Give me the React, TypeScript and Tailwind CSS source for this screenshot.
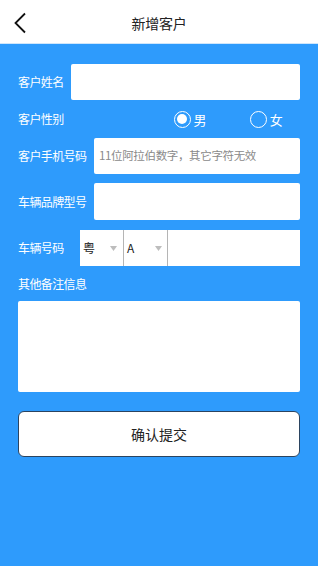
import { type FC } from "react"

const FONT = "font-['Noto_Sans_CJK_SC','Noto_Sans',sans-serif]"

type RadioProps = {
  label: string
  checked?: boolean
}

const Radio: FC<RadioProps> = ({ label, checked }) => (
  <div className="flex items-center gap-[3px]">
    <span className="flex h-[17px] w-[17px] items-center justify-center rounded-full border-[1.5px] border-white">
      {checked && <span className="h-[10px] w-[10px] rounded-full bg-white" />}
    </span>
    <span className="text-[13px] leading-none text-white">{label}</span>
  </div>
)

const Caret = () => (
  <svg width="7" height="5" viewBox="0 0 7 5" className="fill-[#bdbdbd]">
    <path d="M0 0h7L3.5 5z" />
  </svg>
)

const App: FC = () => {
  return (
    <div className={`flex h-[566px] w-[318px] flex-col bg-[#2e9bfc] ${FONT}`}>
      {/* header */}
      <div className="relative flex h-[44px] items-center justify-center border-b border-[#cfe6fb] bg-white">
        <svg
          className="absolute left-[13px] top-[12px]"
          width="14"
          height="22"
          viewBox="0 0 14 22"
          fill="none"
          stroke="#111"
          strokeWidth="1.8"
        >
          <path d="M12 1.5 2.5 11 12 20.5" />
        </svg>
        <span className="mt-[3px] text-[14px] tracking-[-0.3px] text-[#222]">新增客户</span>
      </div>

      <div className="flex flex-col px-[18px] pt-[20px]">
        <div className="flex h-[36px] items-center">
          <span className="w-[53px] text-[12px] tracking-[-0.6px] text-white">客户姓名</span>
          <div className="h-full flex-1 rounded-[2px] bg-white" />
        </div>

        <div className="flex h-[38px] items-center">
          <span className="text-[12px] tracking-[-0.6px] text-white">客户性别</span>
          <div className="ml-[110px]">
            <Radio label="男" checked />
          </div>
          <div className="ml-[43px]">
            <Radio label="女" />
          </div>
        </div>

        <div className="flex h-[36px] items-center">
          <span className="w-[76px] text-[12px] tracking-[-0.6px] text-white">客户手机号码</span>
          <div className="flex h-full flex-1 items-center rounded-[2px] bg-white pl-[5px]">
            <span className="text-[11.5px] tracking-[-0.35px] text-[#8a8a8a]">11位阿拉伯数字，其它字符无效</span>
          </div>
        </div>

        <div className="mt-[9px] flex h-[37px] items-center">
          <span className="w-[76px] text-[12px] tracking-[-0.6px] text-white">车辆品牌型号</span>
          <div className="h-full flex-1 rounded-[2px] bg-white" />
        </div>

        <div className="mt-[10px] flex h-[36px] items-center">
          <span className="w-[62px] text-[12px] tracking-[-0.6px] text-white">车辆号码</span>
          <div className="flex h-full flex-1 bg-white">
            <div className="flex w-[44px] items-center justify-between border-r border-[#b5b5b5] pl-[3px] pr-[6px]">
              <span className="text-[12px] text-[#222]">粤</span>
              <Caret />
            </div>
            <div className="flex w-[44px] items-center justify-between border-r border-[#b5b5b5] pl-[3px] pr-[5px]">
              <span className="text-[12px] text-[#222]">A</span>
              <Caret />
            </div>
            <div className="flex-1" />
          </div>
        </div>

        <span className="mt-[9px] text-[12px] leading-[18px] tracking-[-0.6px] text-white">其他备注信息</span>

        <div className="mt-[8px] h-[91px] rounded-[2px] bg-white" />

        <button className="mt-[19px] flex h-[46px] items-center justify-center rounded-[6px] border border-[#2b4460] bg-white text-[14px] text-[#222]">
          确认提交
        </button>
      </div>
    </div>
  )
}

export default App
